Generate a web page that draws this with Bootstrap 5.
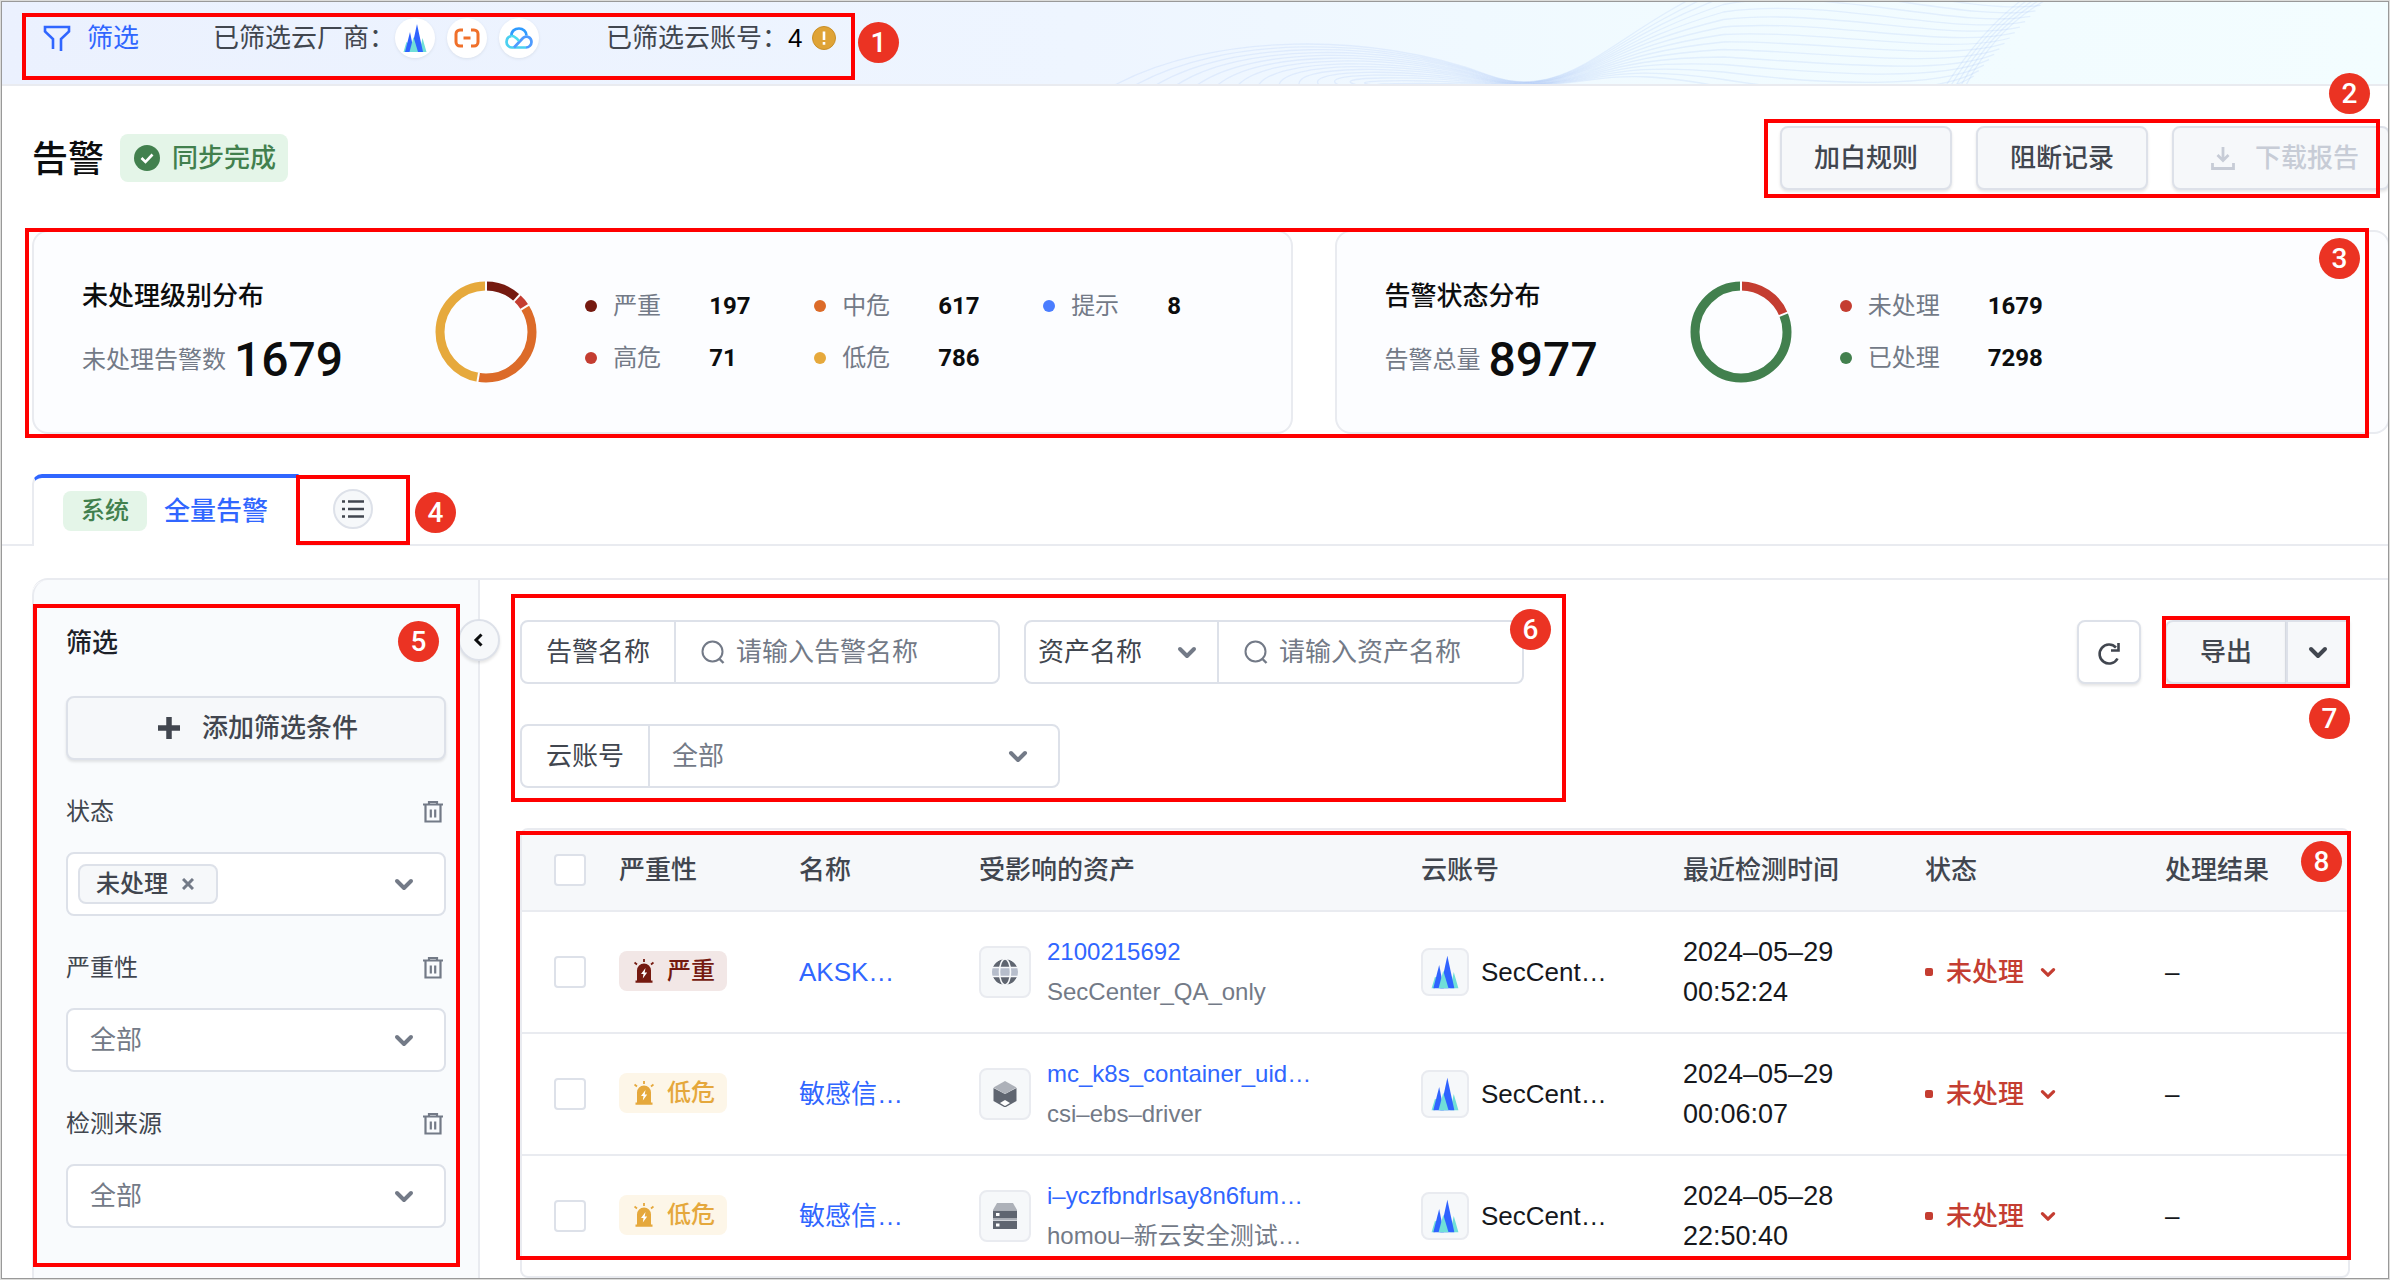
<!DOCTYPE html>
<html lang="zh-CN">
<head>
<meta charset="utf-8">
<meta name="viewport" content="width=device-width, initial-scale=1">
<title>告警</title>
<link href="https://cdn.jsdelivr.net/npm/bootstrap@5.3.0/dist/css/bootstrap.min.css" rel="stylesheet">
<style>
:root{--line:#e9ebf0;--ctl:#dde1e9;--soft:#f6f8fa;--ink:#41464f;--mute:#737a87;--blue:#3066ff;--red:#c43d31;--green:#42804e;}
body{font-family:"Liberation Sans","Noto Sans CJK SC",sans-serif;font-size:26px;line-height:40px;color:var(--ink);background:#dcdcda;padding:1px;height:100vh;overflow:hidden}
a{color:var(--blue);text-decoration:none}
.frame{height:100%;border:1px solid #999;background:#fff;overflow:hidden}
.sheet{margin-right:-2px}
.med{font-weight:500}
.topbar{height:84px;border-bottom:2px solid var(--line);background:linear-gradient(90deg,#ebf1fe 0,#eef5ff 45%,#f1fbff 70%,#f3fdff 100%);padding:16px 37px 26px}
.waves{position:absolute;inset:0;width:100%;height:100%;pointer-events:none}
.waves path{fill:none;stroke:#a9c3f7;stroke-opacity:.22;stroke-width:1.3}
.topbar .btn{color:var(--blue);font-size:26px;line-height:40px}
.vendors{margin-left:74px}.accounts{margin-left:67px}
.vendor{width:40px;height:40px;border-radius:50%;background:#fff;box-shadow:0 1px 3px #d9e0ec}
.edge{padding-left:30px}
.gap-top{margin-top:40px}
.page-title{font-size:36px;line-height:48px;color:#0c0d0e;padding-top:3px}
.sync{height:48px;border-radius:8px;background:#e4f5e8;color:var(--green);padding:0 12px 0 14px;margin-left:16px;gap:12px}
.btn-soft{height:64px;border:2px solid var(--ctl);border-radius:8px;background:var(--soft);color:var(--ink);font-size:26px;line-height:40px;font-weight:500;box-shadow:0 2px 3px #0000001a}
.btn-soft:disabled{background:var(--soft);border-color:var(--ctl);color:#c7ccd6;opacity:1}
.w-act{width:172px}
.w-down{width:218px;gap:20px;padding:0 0 0 8px}
.stats{display:grid;grid-template-columns:minmax(0,1260fr) minmax(0,1055fr);gap:42px}
.stat{height:204px;border:2px solid var(--line);border-radius:16px;background:#fcfdff;padding:0 48px;white-space:nowrap}
.stat-title{font-size:26px;line-height:40px;font-weight:500;color:#0c0d0e;margin-bottom:16px}
.stat-num{font:500 48px/56px Roboto,sans-serif;color:#0c0d0e}
.stat-label{font-size:24px;color:var(--mute);line-height:56px}
.donut{width:102px;height:102px;margin:0 48px 0 92px;flex:none}
.legend{display:grid;grid-template-columns:repeat(3,229px);row-gap:12px}
.legend-one{grid-template-columns:auto}
.legend-item{display:flex;align-items:center;font-size:24px;color:var(--mute)}
.legend-item i{width:12px;height:12px;border-radius:50%;margin-right:16px}
.legend-item b{font:700 24px/40px Roboto,sans-serif;color:#0c0d0e;margin-left:48px}
.tabs{border-bottom:2px solid var(--line);height:72px}
.tab-on{height:72px;border:2px solid var(--line);border-top:4px solid var(--blue);border-bottom:0;border-radius:10px 0 0 0;background:#fff;padding:0 29px 2px;color:var(--blue);font-weight:500;gap:17px}
.sys{height:40px;border-radius:8px;background:#e4f5e8;color:var(--green);font-size:24px;padding:0 18px;font-weight:500}
.round-btn{width:40px;height:40px;border-radius:50%;border:2px solid var(--ctl);background:var(--soft);padding:0}
.tab-more{margin:15px 0 0 34px}
.panel{border-top:2px solid var(--line);border-radius:16px 0 0 0}
.side{width:448px;border:2px solid var(--line);border-width:0 2px;border-radius:16px 0 0 0;background:#f9fbfd;padding:43px 32px}
.collapse-btn{position:absolute;right:-22px;top:39px;width:42px;height:42px;z-index:2;color:#0c0d0e;box-shadow:0 2px 3px #0000001a}
.side-title{font-size:26px;line-height:40px;font-weight:500;color:#1d2129;margin-bottom:33px}
.add-btn{gap:22px;padding-left:16px}
.cond{margin-top:32px}
.cond-head{font-size:24px;line-height:40px;margin-bottom:20px;padding-right:2px}
.ctl{height:64px;border:2px solid var(--ctl);border-radius:8px;background-color:#fff;font-size:26px;line-height:40px;color:var(--mute)}
.form-select{--bs-form-select-bg-img:url("data:image/svg+xml,%3csvg xmlns='http://www.w3.org/2000/svg' viewBox='0 0 20 20'%3e%3cpath fill='none' stroke='%23737a87' stroke-width='4' stroke-linecap='round' stroke-linejoin='round' d='m3 7 7 7 7-7'/%3e%3c/svg%3e");background-size:20px 20px;background-position:right 30px center}
.side .form-select{padding:0 60px 0 22px}
.multi{padding:0 30px 0 10px}
.chip{height:40px;border:2px solid var(--ctl);border-radius:8px;background:var(--soft);font-size:24px;font-weight:500;color:var(--ink);padding:0 16px}
.chip .icon-btn{width:24px;height:24px;margin-left:8px}
.icon-btn{border:0;background:none;padding:0;color:var(--mute);display:flex;align-items:center;justify-content:center}
.group-label{border-right:2px solid var(--ctl);padding:0 24px;color:var(--ink);height:60px;line-height:60px;flex:none}
.g1{width:480px}.g2{width:500px}.g3{width:540px}
.ctl input,.ctl select{border:0;background-color:transparent;font-size:26px;line-height:40px;padding-top:0;padding-bottom:0;height:60px;box-shadow:none;border-radius:0}
.ctl input{padding-left:11px;min-width:0;flex:1;outline:0;color:var(--ink)}
.ctl input::placeholder{color:var(--mute);opacity:1}
.lens{width:24px;height:24px;margin-left:25px;flex:none}
.ctl .pick{width:193px;flex:none;color:var(--ink);border-right:2px solid var(--ctl);padding-left:12px;padding-right:40px;background-position:right 20px center}
.ctl .all{color:var(--mute);padding-left:22px}
.main{padding:40px 40px 0 40px;min-width:0}
.filters{gap:40px 24px}
.w-sq{width:64px}.w-exp{width:122px}
.grid-box{border:2px solid var(--line);border-radius:8px;overflow:hidden}
.grid{table-layout:fixed;margin:0;font-size:26px;--bs-table-color:#16181c}
.grid th,.grid td{padding:0 12px 0 0;border-bottom:2px solid var(--line);vertical-align:middle;height:122px}
.grid th{height:81px;background:var(--soft);color:var(--ink);font-weight:500}
.grid tbody tr:last-child td{border-bottom:0;height:121px}
.grid th:first-child,.grid td:first-child{padding-left:32px}
.grid .form-check-input{width:32px;height:32px;border:2px solid var(--ctl);border-radius:4px;margin:0;display:block}
.c1{width:97px}.c2{width:180px}.c5{width:262px}.c6{width:242px}.c7{width:240px}.c8{width:183px}
.sev{height:40px;border-radius:8px;font-size:24px;font-weight:500;width:108px;padding-left:15px;margin-bottom:3px;display:flex;align-items:center;gap:13px}
.sev-top{background:#f2e7e6;color:#751a10}.sev-low{background:#fdf6e8;color:#e5a83c}
.thing{width:52px;height:52px;border:2px solid var(--line);border-radius:8px;background:var(--soft);flex:none}
.thing-sm{width:48px;height:48px}
.cloud{gap:12px}
.asset{font-size:24px;line-height:40px}
.sub{color:var(--mute)}
.when{font-size:27px;line-height:40px}
.state{color:var(--red);font-weight:500;border:0;background:none;padding:0}
.state i{width:8px;height:8px;background:var(--red);border-radius:2px;margin-right:13px}
.state svg{width:16px;height:16px;margin-left:16px}
.mark-box{position:absolute;border:4px solid #f00;pointer-events:none;z-index:5}
.mark-no{position:absolute;width:41px;height:41px;border-radius:50%;background:#eb3323;color:#fff;font:500 28px/41px Roboto,sans-serif;text-align:center;z-index:6}
.box1{left:20px;top:11px;width:833px;height:67px}.no1{left:856px;top:20px}
.box2{right:10px;top:-7px;width:616px;height:79px}.no2{right:20px;top:-53px}
.box3{left:-7px;right:21px;top:-2px;height:210px}.no3{right:30px;top:8px}
.box4{left:294px;top:1px;width:114px;height:70px}.no4{left:413px;top:18px}
.box5{left:-1px;right:18px;top:24px;bottom:11px}.no5{right:39px;top:41px}
.box6{left:-9px;top:-26px;width:1055px;height:208px}.no6{left:990px;top:-11px}
.box7{left:-3px;right:0;top:-4px;height:72px}.no7{right:0;top:78px}
.box8{left:-4px;right:-1px;top:3px;bottom:18px}.no8{right:8px;top:13px}
</style>
</head>
<body>
<svg class="d-none" xmlns="http://www.w3.org/2000/svg">
  <symbol id="volc" viewBox="0 0 24 28"><path fill="#70dfd8" d="M3.500 28H.500L3.400 18l3 2zM19.500 14l4 14h-7z"/><path fill="#2f63ff" d="M14 0 20 28H8z"/><path fill="#2f63ff" d="M7 8 11 28H2z"/><path fill="#70dfd8" d="M10.500 13 15 28H6.500z"/></symbol>
  <symbol id="trash" viewBox="0 0 22 24"><path fill="none" stroke="currentColor" stroke-width="2.200" d="M1 4.500h20M7 4V2h8v2M3.500 5v16.500h15V5M8.800 9.500v8M13.200 9.500v8"/></symbol>
  <symbol id="down" viewBox="0 0 20 20"><path fill="none" stroke="currentColor" stroke-width="4" stroke-linecap="round" stroke-linejoin="round" d="m3 7 7 7 7-7"/></symbol>
  <symbol id="lens" viewBox="0 0 24 24"><circle cx="11.500" cy="11.500" r="10" fill="none" stroke="currentColor" stroke-width="2"/><path stroke="currentColor" stroke-width="2.400" d="m18.500 19 4 4"/></symbol>
  <symbol id="siren" viewBox="0 0 20 24"><path fill="currentColor" d="M3 21.500V11.500a7 7 0 0 1 14 0V21.500h1.500v2.200h-17v-2.200z"/><path stroke="currentColor" stroke-width="1.800" d="M10 0v3M.5 3.500 3 5.500M19.500 3.500 17 5.500"/><path fill="#fff" d="M11.500 9 7 15h2.500L8.800 19.500 13.200 13.500h-2.500z"/></symbol>
  <symbol id="globe" viewBox="0 0 26 26"><circle cx="13" cy="13" r="13" fill="#5f6570"/><path fill="#b6bdcb" d="M0 9h26v8H0z"/><path fill="none" stroke="#f6f8fa" stroke-width="1.600" d="M0 8.500h26M0 17.500h26"/><ellipse cx="13" cy="13" rx="5.500" ry="13" fill="none" stroke="#f6f8fa" stroke-width="1.600"/><circle cx="13" cy="13" r="14" fill="none" stroke="#f6f8fa" stroke-width="2"/></symbol>
  <symbol id="cube" viewBox="0 0 26 26"><path fill="#5f6570" d="M1.500 7 13 13l11.500-6v13L13 26.500 1.500 20z"/><path fill="#adb1b9" d="M13 0 24.500 6.500 13 13 1.500 6.500z"/><path fill="#fff" d="m13 19 5 3-5 3-5-3z"/></symbol>
  <symbol id="server" viewBox="0 0 26 26"><path fill="#adb1b9" d="M5 0h16l4 7H1z"/><path fill="#5f6570" d="M1 7.500h24v8H1zM1 18h24v8H1z"/><path fill="#adb1b9" d="M1 16h24v1.500H1z"/><path fill="#fff" d="M4 10h3.500v3H4zM4 20.500h3.500v3H4z"/></symbol>
</svg>
<div class="frame"><div class="sheet">

  <header class="topbar position-relative d-flex align-items-start">
    <svg class="waves" id="waves" viewBox="0 0 2386 82" preserveAspectRatio="none"></svg>
    <button class="btn border-0 p-0 d-flex align-items-center" type="button">
      <svg class="ms-1 me-3" width="28" height="28" viewBox="0 0 28 28" fill="none" stroke="currentColor" stroke-width="2.600"><path d="M10 25V15L2 7.500V3h24v4.500L18 15v12"/></svg>筛选</button>
    <div class="vendors d-flex align-items-center">
      <span>已筛选云厂商：</span>
      <div class="cloud d-flex">
        <span class="vendor d-flex align-items-center justify-content-center"><svg width="24" height="28"><use href="#volc"/></svg></span>
        <span class="vendor d-flex align-items-center justify-content-center"><svg width="26" height="20" viewBox="0 0 26 20" fill="none" stroke="#f0702a" stroke-width="3"><path d="M9 2H6a4 4 0 0 0-4 4v8a4 4 0 0 0 4 4h3M17 2h3a4 4 0 0 1 4 4v8a4 4 0 0 1-4 4h-3M9.500 10h7"/></svg></span>
        <span class="vendor d-flex align-items-center justify-content-center"><svg width="28" height="22" viewBox="0 0 28 22" fill="none" stroke-width="2.700"><path stroke="#2f9bff" d="M6.500 9C6 4 10 1.500 14 1.500S21.500 4.500 21.500 8.500"/><path stroke="#4cd0f0" d="M6.500 9C3.500 9.500 1.500 12 1.500 15s2.500 5.500 5.500 5.500h14"/><path stroke="#4f9bff" d="M9 20.500 18 11c3-3 8.500-1 8.500 4 0 3-2.500 5.500-5.500 5.500"/><path stroke="#4cdcf0" d="M6.500 9c2.500-.3 4 .7 7.500 5"/></svg></span>
      </div>
    </div>
    <div class="accounts d-flex align-items-center">
      <span>已筛选云账号：</span><span class="text-black">4</span>
      <svg class="ms-2" width="26" height="26" viewBox="0 0 26 26"><circle cx="13" cy="13" r="11.500" fill="#dfa336" stroke="#c98f28"/><path stroke="#fff" stroke-width="2.600" d="M13 6.500v8.500M13 17v2.800"/></svg>
    </div>
    <span class="mark-box box1"></span><span class="mark-no no1">1</span>
  </header>

  <div class="edge gap-top d-flex align-items-center justify-content-between position-relative">
    <div class="d-flex align-items-center">
      <h1 class="page-title mb-0 med">告警</h1>
      <span class="sync d-flex align-items-center med">
        <svg width="26" height="26" viewBox="0 0 26 26"><circle cx="13" cy="13" r="13" fill="currentColor"/><path fill="none" stroke="#fff" stroke-width="2.600" d="m7.500 13 4 4 7-7.500"/></svg>同步完成</span>
    </div>
    <div class="d-flex gap-4">
      <button class="btn btn-soft w-act" type="button">加白规则</button>
      <button class="btn btn-soft w-act" type="button">阻断记录</button>
      <button class="btn btn-soft w-down d-flex align-items-center justify-content-center" type="button" disabled>
        <svg width="24" height="24" viewBox="0 0 24 24" fill="none" stroke="currentColor" stroke-width="2.800"><path d="M12 1v12M6.500 9l5.500 5.500L17.500 9M1.500 17v5.500h21V17"/></svg>下载报告</button>
    </div>
    <span class="mark-box box2"></span><span class="mark-no no2">2</span>
  </div>

  <div class="edge gap-top"><div class="stats position-relative">
    <section class="stat d-flex align-items-center">
      <div>
        <h2 class="stat-title">未处理级别分布</h2>
        <div class="d-flex"><span class="stat-label">未处理告警数</span><span class="stat-num ms-2">1679</span></div>
      </div>
      <svg class="donut" data-parts="197:#751a10,71:#c43d31,617:#dc6b29,786:#e6a93c,8:#e6a93c" viewBox="0 0 102 102"></svg>
      <div class="legend">
        <span class="legend-item"><i style="background:#751a10"></i>严重<b>197</b></span>
        <span class="legend-item"><i style="background:#dc6b29"></i>中危<b>617</b></span>
        <span class="legend-item"><i style="background:#4a7dff"></i>提示<b>8</b></span>
        <span class="legend-item"><i style="background:#c43d31"></i>高危<b>71</b></span>
        <span class="legend-item"><i style="background:#e6a93c"></i>低危<b>786</b></span>
      </div>
    </section>
    <section class="stat d-flex align-items-center">
      <div>
        <h2 class="stat-title">告警状态分布</h2>
        <div class="d-flex"><span class="stat-label">告警总量</span><span class="stat-num ms-2">8977</span></div>
      </div>
      <svg class="donut" data-parts="1679:#c43d31,7298:#42804e" viewBox="0 0 102 102"></svg>
      <div class="legend legend-one">
        <span class="legend-item"><i style="background:#c43d31"></i>未处理<b>1679</b></span>
        <span class="legend-item"><i style="background:#42804e"></i>已处理<b>7298</b></span>
      </div>
    </section>
    <span class="mark-box box3"></span><span class="mark-no no3">3</span>
  </div></div>

  <nav class="tabs edge gap-top d-flex position-relative">
    <a class="tab-on d-flex align-items-center" href="#all"><span class="sys">系统</span>全量告警</a>
    <button class="round-btn tab-more d-flex align-items-center justify-content-center" type="button" aria-label="列表">
      <svg width="22" height="20" viewBox="0 0 22 20" stroke="#41464f" stroke-width="2.400"><path d="M0 2.500h3M6 2.500h16M0 10h3M6 10h16M0 17.500h3M6 17.500h16"/></svg></button>
    <span class="mark-box box4"></span><span class="mark-no no4">4</span>
  </nav>

  <div class="edge" style="margin-top:32px"><div class="panel d-flex">
    <aside class="side position-relative flex-shrink-0">
      <h2 class="side-title">筛选</h2>
      <button class="btn btn-soft add-btn w-100 d-flex align-items-center justify-content-center" type="button">
        <svg width="22" height="22" viewBox="0 0 22 22" stroke="currentColor" stroke-width="5.500"><path d="M11 0v22M0 11h22"/></svg>添加筛选条件</button>
      <div class="cond">
        <div class="cond-head d-flex justify-content-between">状态<button class="icon-btn" type="button" aria-label="删除"><svg width="22" height="24"><use href="#trash"/></svg></button></div>
        <div class="ctl multi d-flex align-items-center justify-content-between">
          <span class="chip d-flex align-items-center">未处理<button class="icon-btn" type="button" aria-label="移除"><svg width="12" height="12" viewBox="0 0 12 12" stroke="currentColor" stroke-width="3"><path d="m1 1 10 10M11 1 1 11"/></svg></button></span>
          <button class="icon-btn" type="button" aria-label="展开"><svg width="20" height="20"><use href="#down"/></svg></button>
        </div>
      </div>
      <div class="cond">
        <div class="cond-head d-flex justify-content-between"><label for="sev">严重性</label><button class="icon-btn" type="button" aria-label="删除"><svg width="22" height="24"><use href="#trash"/></svg></button></div>
        <select id="sev" class="form-select ctl"><option>全部</option></select>
      </div>
      <div class="cond">
        <div class="cond-head d-flex justify-content-between"><label for="src">检测来源</label><button class="icon-btn" type="button" aria-label="删除"><svg width="22" height="24"><use href="#trash"/></svg></button></div>
        <select id="src" class="form-select ctl"><option>全部</option></select>
      </div>
      <button class="round-btn collapse-btn d-flex align-items-center justify-content-center" type="button" aria-label="收起"><svg width="14" height="14" viewBox="0 0 14 14" fill="none" stroke="currentColor" stroke-width="3"><path d="M9.500 1.500 4 7l5.500 5.500"/></svg></button>
      <span class="mark-box box5"></span><span class="mark-no no5">5</span>
    </aside>

    <main class="main flex-grow-1">
      <div class="d-flex align-items-start gap-4">
        <div class="filters d-flex flex-wrap flex-grow-1 position-relative">
          <div class="ctl g1 d-flex align-items-center"><label class="group-label" for="q1">告警名称</label><svg class="lens"><use href="#lens"/></svg><input id="q1" placeholder="请输入告警名称"></div>
          <div class="ctl g2 d-flex align-items-center"><select class="form-select pick" aria-label="字段"><option>资产名称</option></select><svg class="lens"><use href="#lens"/></svg><input id="q2" aria-label="资产名称" placeholder="请输入资产名称"></div>
          <div class="ctl g3 d-flex align-items-center"><label class="group-label" for="acc">云账号</label><select id="acc" class="form-select all"><option>全部</option></select></div>
          <span class="mark-box box6"></span><span class="mark-no no6">6</span>
        </div>
        <button class="btn btn-soft bg-white w-sq p-0 flex-shrink-0" type="button" aria-label="刷新"><svg width="24" height="24" viewBox="0 0 24 24" fill="none" stroke="currentColor" stroke-width="2.600"><path d="M20.500 16.500A9.500 9.500 0 1 1 19 5.500M21.500 1v7.500H14"/></svg></button>
        <div class="btn-group flex-shrink-0 position-relative">
          <button class="btn btn-soft w-exp" type="button">导出</button>
          <button class="btn btn-soft w-sq p-0 d-flex align-items-center justify-content-center" type="button" aria-label="更多"><svg width="20" height="20"><use href="#down"/></svg></button>
          <span class="mark-box box7"></span><span class="mark-no no7">7</span>
        </div>
      </div>

      <div class="gap-top position-relative">
        <div class="grid-box">
          <table class="table grid">
            <colgroup><col class="c1"><col class="c2"><col class="c2"><col><col class="c5"><col class="c6"><col class="c7"><col class="c8"></colgroup>
            <thead><tr><th><input class="form-check-input" type="checkbox" aria-label="全选"></th><th>严重性</th><th>名称</th><th>受影响的资产</th><th>云账号</th><th>最近检测时间</th><th>状态</th><th>处理结果</th></tr></thead>
            <tbody>
              <tr><td><input class="form-check-input" type="checkbox" aria-label="选择"></td>
                <td><span class="sev sev-top"><svg width="20" height="24"><use href="#siren"/></svg>严重</span></td>
                <td><a href="#a1">AKSK…</a></td>
                <td><div class="d-flex align-items-center gap-3"><span class="thing d-flex align-items-center justify-content-center"><svg width="26" height="26"><use href="#globe"/></svg></span><div class="asset"><a href="#r1">2100215692</a><div class="sub">SecCenter_QA_only</div></div></div></td>
                <td><div class="cloud d-flex align-items-center"><span class="thing thing-sm d-flex align-items-center justify-content-center"><svg width="28" height="34"><use href="#volc"/></svg></span>SecCent…</div></td>
                <td><div class="when">2024–05–29<br>00:52:24</div></td>
                <td><button class="state d-flex align-items-center" type="button"><i></i>未处理<svg><use href="#down"/></svg></button></td><td>–</td></tr>
              <tr><td><input class="form-check-input" type="checkbox" aria-label="选择"></td>
                <td><span class="sev sev-low"><svg width="20" height="24"><use href="#siren"/></svg>低危</span></td>
                <td><a href="#a2">敏感信…</a></td>
                <td><div class="d-flex align-items-center gap-3"><span class="thing d-flex align-items-center justify-content-center"><svg width="26" height="26"><use href="#cube"/></svg></span><div class="asset"><a href="#r2">mc_k8s_container_uid…</a><div class="sub">csi–ebs–driver</div></div></div></td>
                <td><div class="cloud d-flex align-items-center"><span class="thing thing-sm d-flex align-items-center justify-content-center"><svg width="28" height="34"><use href="#volc"/></svg></span>SecCent…</div></td>
                <td><div class="when">2024–05–29<br>00:06:07</div></td>
                <td><button class="state d-flex align-items-center" type="button"><i></i>未处理<svg><use href="#down"/></svg></button></td><td>–</td></tr>
              <tr><td><input class="form-check-input" type="checkbox" aria-label="选择"></td>
                <td><span class="sev sev-low"><svg width="20" height="24"><use href="#siren"/></svg>低危</span></td>
                <td><a href="#a3">敏感信…</a></td>
                <td><div class="d-flex align-items-center gap-3"><span class="thing d-flex align-items-center justify-content-center"><svg width="26" height="26"><use href="#server"/></svg></span><div class="asset"><a href="#r3">i–yczfbndrlsay8n6fum…</a><div class="sub">homou–新云安全测试…</div></div></div></td>
                <td><div class="cloud d-flex align-items-center"><span class="thing thing-sm d-flex align-items-center justify-content-center"><svg width="28" height="34"><use href="#volc"/></svg></span>SecCent…</div></td>
                <td><div class="when">2024–05–28<br>22:50:40</div></td>
                <td><button class="state d-flex align-items-center" type="button"><i></i>未处理<svg><use href="#down"/></svg></button></td><td>–</td></tr>
            </tbody>
          </table>
        </div>
        <span class="mark-box box8"></span><span class="mark-no no8">8</span>
      </div>
    </main>
  </div></div>

</div></div>
<script src="https://cdn.jsdelivr.net/npm/bootstrap@5.3.0/dist/js/bootstrap.bundle.min.js"></script>
<script>
// donut rings: one arc per part, with a thin gap between parts
document.querySelectorAll('.donut').forEach(function (svg) {
  var parts = svg.dataset.parts.split(',').map(function (p) { return p.split(':'); });
  var total = parts.reduce(function (s, p) { return s + +p[0]; }, 0), r = 46, c = 2 * Math.PI * r, at = 0, out = '', cuts = '';
  parts.forEach(function (p, i) {
    var len = c * p[0] / total;
    out += '<circle cx="51" cy="51" r="46" fill="none" stroke="' + p[1] + '" stroke-width="9" stroke-dasharray="' + len + ' ' + c + '" stroke-dashoffset="' + (-at) + '" transform="rotate(-90 51 51)"/>';
    if (i < 4) cuts += '<path stroke="#fcfdff" stroke-width="2" d="M51 0v10" transform="rotate(' + (360 * at / c) + ' 51 51)"/>';
    at += len;
  });
  svg.innerHTML = out + cuts;
});
// header wave lines: a family of curves that meet at the trough and fan out again
var d = '';
for (var i = 0; i <= 14; i++) {
  var t = i / 14;
  d += '<path d="M' + (1110 + 290 * t) + ' 84C' + (1210 + 120 * t) + ' ' + (30 + 52 * t) + ' ' + (1370 + 50 * t) + ' ' + (30 + 50 * t) + ' 1485 ' + (73 + 10 * t) +
    'C1515 ' + (84 + t) + ' 1545 ' + (83 + t) + ' 1585 ' + (60 + 18 * t) + 'C1620 ' + (40 + 33 * t) + ' 1650 ' + (14 + 58 * t) + ' 1720 ' + (-20 + 105 * t) +
    'C1820 ' + (-50 + 155 * t) + ' ' + (1960 - 30 * t) + ' ' + (8 + 92 * t) + ' ' + (2042 - 72 * t) + ' ' + (-2 + 76 * t) + '"/>';
}
for (var k = 0; k < 5; k++) {
  d += '<path d="M' + (1962 - 5 * k) + ' 84Q' + (1990 - 3 * k) + ' 28 ' + (2042 - 6 * k) + ' -2"/>';
}
document.getElementById('waves').innerHTML = d;
</script>
</body>
</html>
